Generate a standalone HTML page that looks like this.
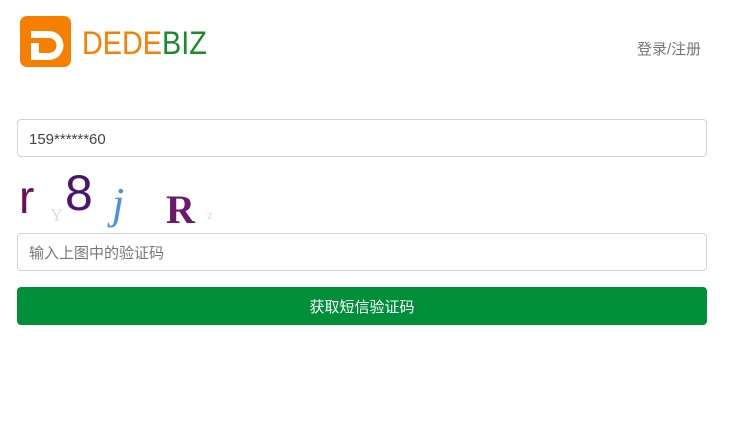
<!DOCTYPE html>
<html><head><meta charset="utf-8">
<style>
body{margin:0;width:736px;height:439px;background:#fff;font-family:"Liberation Sans","Noto Sans CJK SC",sans-serif;position:relative;overflow:hidden}
.logo{position:absolute;left:20px;top:16px;width:51px;height:51px;background:#f77f00;border-radius:7px}
.brand{position:absolute;left:82px;top:24px;font-size:32px;line-height:38px;font-family:"Liberation Sans",sans-serif;transform:scaleX(0.9);transform-origin:0 0;white-space:nowrap}
.login{position:absolute;left:637px;top:38px;font-size:15px;color:#777}
.inp{position:absolute;left:17px;width:688px;height:36px;border:1px solid #ced4da;border-radius:4px;font-size:15px;line-height:40px;text-indent:11px;box-sizing:content-box;overflow:hidden}
.btn{position:absolute;left:17px;top:287px;width:690px;height:38px;background:#008f39;border-radius:4px;color:#fff;font-size:15px;line-height:41px;text-align:center}
.c{position:absolute;font-family:"Liberation Serif",serif}
</style></head><body>
<div class="logo">
<svg width="51" height="51" viewBox="0 0 51 51"><path fill-rule="evenodd" d="M11 15 H29 A14.5 14.5 0 0 1 29 44 H11 Z M19 22 H29 A7.5 7.5 0 0 1 29 37 H19 Z" fill="#fff"/><rect x="11" y="22" width="9" height="5" fill="#f77f00"/></svg>
</div>
<div class="brand"><span style="color:#f77f00">DEDE</span><span style="color:#1a8a2a">BIZ</span></div>
<div class="login">登录/注册</div>
<div class="inp" style="top:119px;color:#444">159******60</div>
<div class="c" style="left:19px;top:170px;font-size:46px;color:#6b0f5a;font-family:'Liberation Sans',sans-serif">r</div>
<div class="c" style="left:50px;top:205px;font-size:18px;color:#ddd">Y</div>
<div class="c" style="left:65px;top:164px;font-size:50px;color:#4a1570;font-family:'Liberation Sans',sans-serif">8</div>
<div class="c" style="left:112px;top:178px;font-size:44px;color:#4a8fe0;font-style:italic">j</div>
<div class="c" style="left:166px;top:186px;font-size:40px;color:#6b1a6e;font-weight:bold">R</div>
<div class="c" style="left:207px;top:207px;font-size:13px;color:#cde">z</div>
<div class="inp" style="top:233px;color:#777">输入上图中的验证码</div>
<div class="btn">获取短信验证码</div>
</body></html>
